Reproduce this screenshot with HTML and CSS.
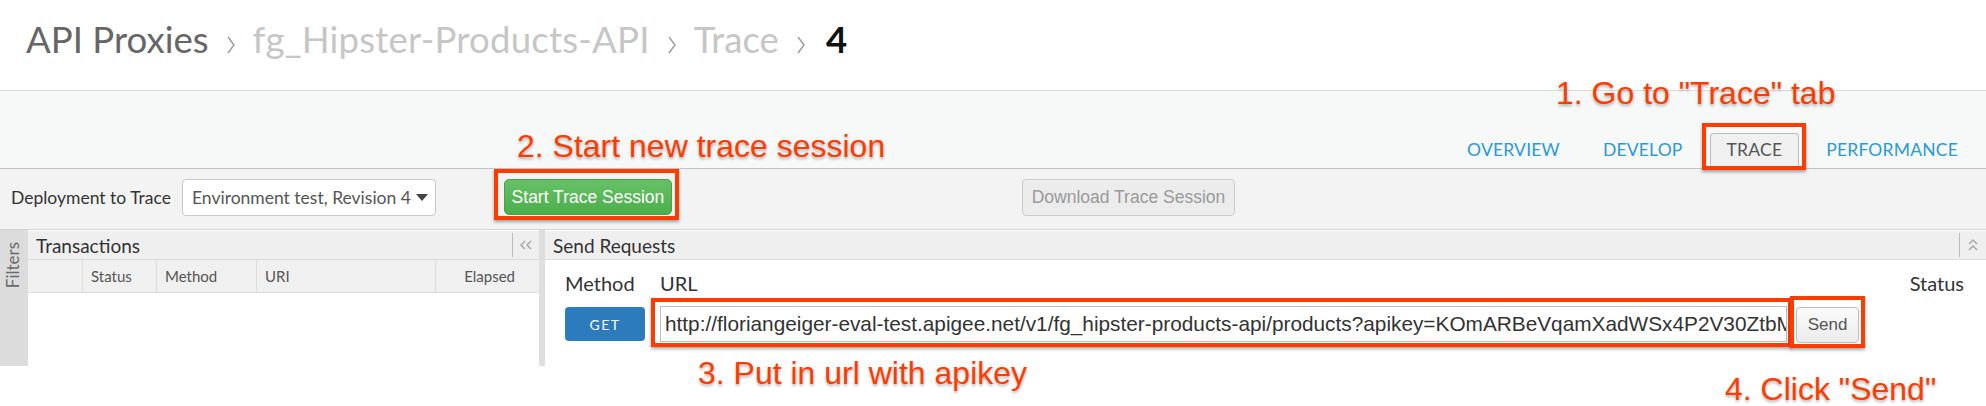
FILE: index.html
```html
<!DOCTYPE html>
<html lang="en">
<head>
<title>Trace - fg_Hipster-Products-API</title>
<meta charset="utf-8">
<link rel="stylesheet" href="styles.css">
</head>
<body>
<div id="page">

<header class="crumbs">
<span class="crumb">API Proxies</span>
<svg class="sep" width="10" height="20" viewBox="0 0 10 20"><polyline points="2,2 8,10 2,18" fill="none" stroke="#9a9a9a" stroke-width="1.4"/></svg>
<span class="crumb dim name">fg_Hipster-Products-API</span>
<svg class="sep" width="10" height="20" viewBox="0 0 10 20"><polyline points="2,2 8,10 2,18" fill="none" stroke="#9a9a9a" stroke-width="1.4"/></svg>
<span class="crumb dim">Trace</span>
<svg class="sep" width="10" height="20" viewBox="0 0 10 20"><polyline points="2,2 8,10 2,18" fill="none" stroke="#9a9a9a" stroke-width="1.4"/></svg>
<span class="crumb current">4</span>
</header>

<div class="band">
<nav class="tabs">
<a class="tab">OVERVIEW</a>
<a class="tab">DEVELOP</a>
<a class="tab active marked">TRACE</a>
<a class="tab">PERFORMANCE</a>
</nav>
</div>

<div class="toolbar">
<label class="deploy-label">Deployment to Trace</label>
<div class="select">Environment test, Revision 4 <span class="caret"></span></div>
<span class="mark-start"><button class="btn-start">Start Trace Session</button></span>
<button class="btn-download">Download Trace Session</button>
</div>

<div class="panels">
<div class="filters"><span>Filters</span></div>

<section class="tx">
<div class="panel-head">
<span>Transactions</span>
<span class="head-tool">
<svg width="12" height="10" viewBox="0 0 12 10"><polyline points="5,1 1,5 5,9" fill="none" stroke="#a8a8a8" stroke-width="1.5"/><polyline points="11,1 7,5 11,9" fill="none" stroke="#a8a8a8" stroke-width="1.5"/></svg>
</span>
</div>
<div class="cols">
<div class="col c0"></div>
<div class="col c1">Status</div>
<div class="col c2">Method</div>
<div class="col c3">URI</div>
<div class="col c4">Elapsed</div>
</div>
</section>

<div class="divider"></div>

<section class="send">
<div class="panel-head">
<span>Send Requests</span>
<span class="head-tool">
<svg width="10" height="14" viewBox="0 0 10 14"><polyline points="1,6 5,2 9,6" fill="none" stroke="#a8a8a8" stroke-width="1.5"/><polyline points="1,12 5,8 9,12" fill="none" stroke="#a8a8a8" stroke-width="1.5"/></svg>
</span>
</div>
<div class="req">
<div class="req-labels">
<span class="lbl-method">Method</span>
<span class="lbl-url">URL</span>
<span class="lbl-status">Status</span>
</div>
<div class="req-row">
<button class="btn-get">GET</button>
<span class="mark-url"><input class="url" type="text" value="http://floriangeiger-eval-test.apigee.net/v1/fg_hipster-products-api/products?apikey=KOmARBeVqamXadWSx4P2V30ZtbM"></span>
<span class="mark-send"><button class="btn-send">Send</button></span>
</div>
</div>
</section>
</div>

<p class="note n1">1. Go to "Trace" tab</p>
<p class="note n2">2. Start new trace session</p>
<p class="note n3">3. Put in url with apikey</p>
<p class="note n4">4. Click "Send"</p>

</div>
</body>
</html>
```

FILE: styles.css
```css
body {
margin: 0;
background-color: #fff;
font-family: Lato, "Open Sans", sans-serif;
color: #333;
}
#page {
position: relative;
width: 1986px;
height: 406px;
overflow: hidden;
}

/* breadcrumbs */
.crumbs {
height: 72px;
padding: 18px 0 0 26px;
border-bottom: 1px solid #d9dbdb;
display: flex;
align-items: flex-start;
font-size: 36.6px;
line-height: 43px;
color: #666;
}
.sep {
margin: 17px 17px 0 17px;
}
.crumb.dim {
color: #c6c6c6;
}
.crumb.name {
letter-spacing: 0.2px;
}
.crumb.current {
color: #111;
font-weight: bold;
margin-left: 3px;
}

/* tab band */
.band {
height: 77px;
background-color: #f7f8f8;
border-bottom: 1px solid #c4c4c4;
display: flex;
justify-content: flex-end;
align-items: flex-end;
}
.tabs {
display: flex;
gap: 11px;
padding-right: 12px;
}
.tab {
display: block;
height: 34px;
line-height: 32px;
padding: 0 15px;
font-size: 17.5px;
color: #2b9ad6;
letter-spacing: 0.2px;
border: 1px solid transparent;
border-bottom: none;
}
.tab.active {
color: #555;
background-color: #f0f0f0;
border-color: #bdbdbd;
border-radius: 4px 4px 0 0;
padding: 0 16px;
}

/* red hint boxes */
.marked, .mark-start, .mark-url, .mark-send {
position: relative;
}
.marked::after, .mark-start::after, .mark-url::after, .mark-send::after {
content: "";
position: absolute;
border: 4px solid #ff3c00;
box-shadow: 0 2px 3px rgba(0, 0, 0, 0.35);
pointer-events: none;
}
.marked::after {
top: -11px; left: -9px; right: -8px; bottom: -2px;
}
.mark-start::after {
top: -10px; left: -10px; right: -7px; bottom: -5px;
}
.mark-url::after {
top: -8px; left: -9px; right: -5px; bottom: -5px;
}
.mark-send::after {
top: -11px; left: -6px; right: -6px; bottom: -5px;
}

/* toolbar */
.toolbar {
height: 50px;
padding-top: 10px;
background-color: #f3f3f3;
border-bottom: 1px solid #d3d3d3;
display: flex;
align-items: flex-start;
}
.deploy-label {
margin: 8px 0 0 11px;
font-size: 17.5px;
color: #333;
}
.select {
margin-left: 11px;
width: 236px;
height: 35px;
padding-left: 9px;
padding-right: 7px;
border: 1px solid #c8c8c8;
border-radius: 4px;
background-color: #fff;
font-size: 17.5px;
line-height: 35px;
color: #555;
display: flex;
align-items: center;
justify-content: space-between;
}
.caret {
width: 0;
height: 0;
border-left: 6px solid transparent;
border-right: 6px solid transparent;
border-top: 7px solid #444;
margin-left: 4px;
}
.mark-start {
margin-left: 68px;
display: block;
}
.btn-start {
display: block;
width: 168px;
height: 36px;
border: 1px solid #47a447;
border-radius: 5px;
background: linear-gradient(#66c166, #4cae4c);
color: #fff;
font-family: "Liberation Sans", Arial, sans-serif;
font-size: 17.5px;
padding: 0;
}
.btn-download {
margin-left: 350px;
width: 213px;
height: 37px;
border: 1px solid #cbcbcb;
border-radius: 4px;
background-color: #ececec;
color: #9a9a9a;
font-family: "Liberation Sans", Arial, sans-serif;
font-size: 17.5px;
padding: 0;
}

/* panels */
.panels {
height: 136px;
display: flex;
background-color: #fff;
}
.filters {
width: 28px;
background-color: #dcdcdc;
}
.filters span {
display: block;
writing-mode: vertical-rl;
transform: rotate(180deg);
font-size: 17px;
color: #6a6a6a;
margin: 12px 0 0 2px;
}
.tx {
width: 511px;
}
.divider {
width: 6px;
background-color: #dedede;
}
.send {
flex: 1;
}
.panel-head {
height: 28px;
margin-top: 1px;
padding-left: 8px;
background-color: #efefef;
border-bottom: 1px solid #dcdcdc;
font-size: 19px;
line-height: 30px;
color: #333;
display: flex;
justify-content: space-between;
}
.head-tool {
width: 26px;
border-left: 1px solid #bcbcbc;
margin: 2px 0;
display: flex;
align-items: center;
justify-content: center;
}
.cols {
height: 32px;
display: flex;
background-color: #f0f0f0;
border-bottom: 1px solid #dcdcdc;
font-size: 15px;
line-height: 32px;
color: #555;
}
.col {
padding-left: 8px;
border-right: 1px solid #dcdcdc;
box-sizing: border-box;
}
.c0 { width: 55px; }
.c1 { width: 74px; }
.c2 { width: 100px; }
.c3 { width: 179px; }
.c4 {
width: 103px;
text-align: right;
padding-right: 24px;
border-right: none;
}

.req {
padding: 10px 22px 0 20px;
}
.req-labels {
display: flex;
font-size: 20px;
line-height: 26px;
color: #333;
}
.lbl-method {
width: 95px;
}
.lbl-url {
flex: 1;
}
.req-row {
margin-top: 10px;
display: flex;
align-items: flex-start;
}
.btn-get {
width: 80px;
height: 34px;
margin-top: 1px;
border: none;
border-radius: 4px;
background-color: #2b7bbd;
color: #fff;
font-family: Lato, sans-serif;
font-size: 14px;
letter-spacing: 1.5px;
padding: 0;
}
.mark-url {
display: block;
margin-left: 15px;
}
.url {
display: block;
width: 1127px;
height: 36px;
box-sizing: border-box;
border: 1px solid #bdbdbd;
padding: 0 0 0 4px;
font-family: "Liberation Sans", Arial, sans-serif;
font-size: 20.8px;
color: #333;
margin: 0;
}
.mark-send {
display: block;
margin-left: 9px;
margin-top: 1px;
}
.btn-send {
display: block;
width: 63px;
height: 36px;
border: 1px solid #bdbdbd;
border-radius: 4px;
background: linear-gradient(#fafafa, #ececec);
color: #555;
font-family: "Liberation Sans", Arial, sans-serif;
font-size: 17px;
padding: 0;
}

/* annotations */
.note {
position: absolute;
margin: 0;
font-family: "Liberation Sans", Arial, sans-serif;
font-size: 32px;
line-height: 32px;
color: #ff3c00;
white-space: nowrap;
text-shadow: 0 2px 3px rgba(0, 0, 0, 0.3);
}
.n1 { left: 1556px; top: 77px; }
.n2 { left: 517px; top: 130px; }
.n3 { left: 698px; top: 357px; }
.n4 { left: 1725px; top: 373px; }
```
